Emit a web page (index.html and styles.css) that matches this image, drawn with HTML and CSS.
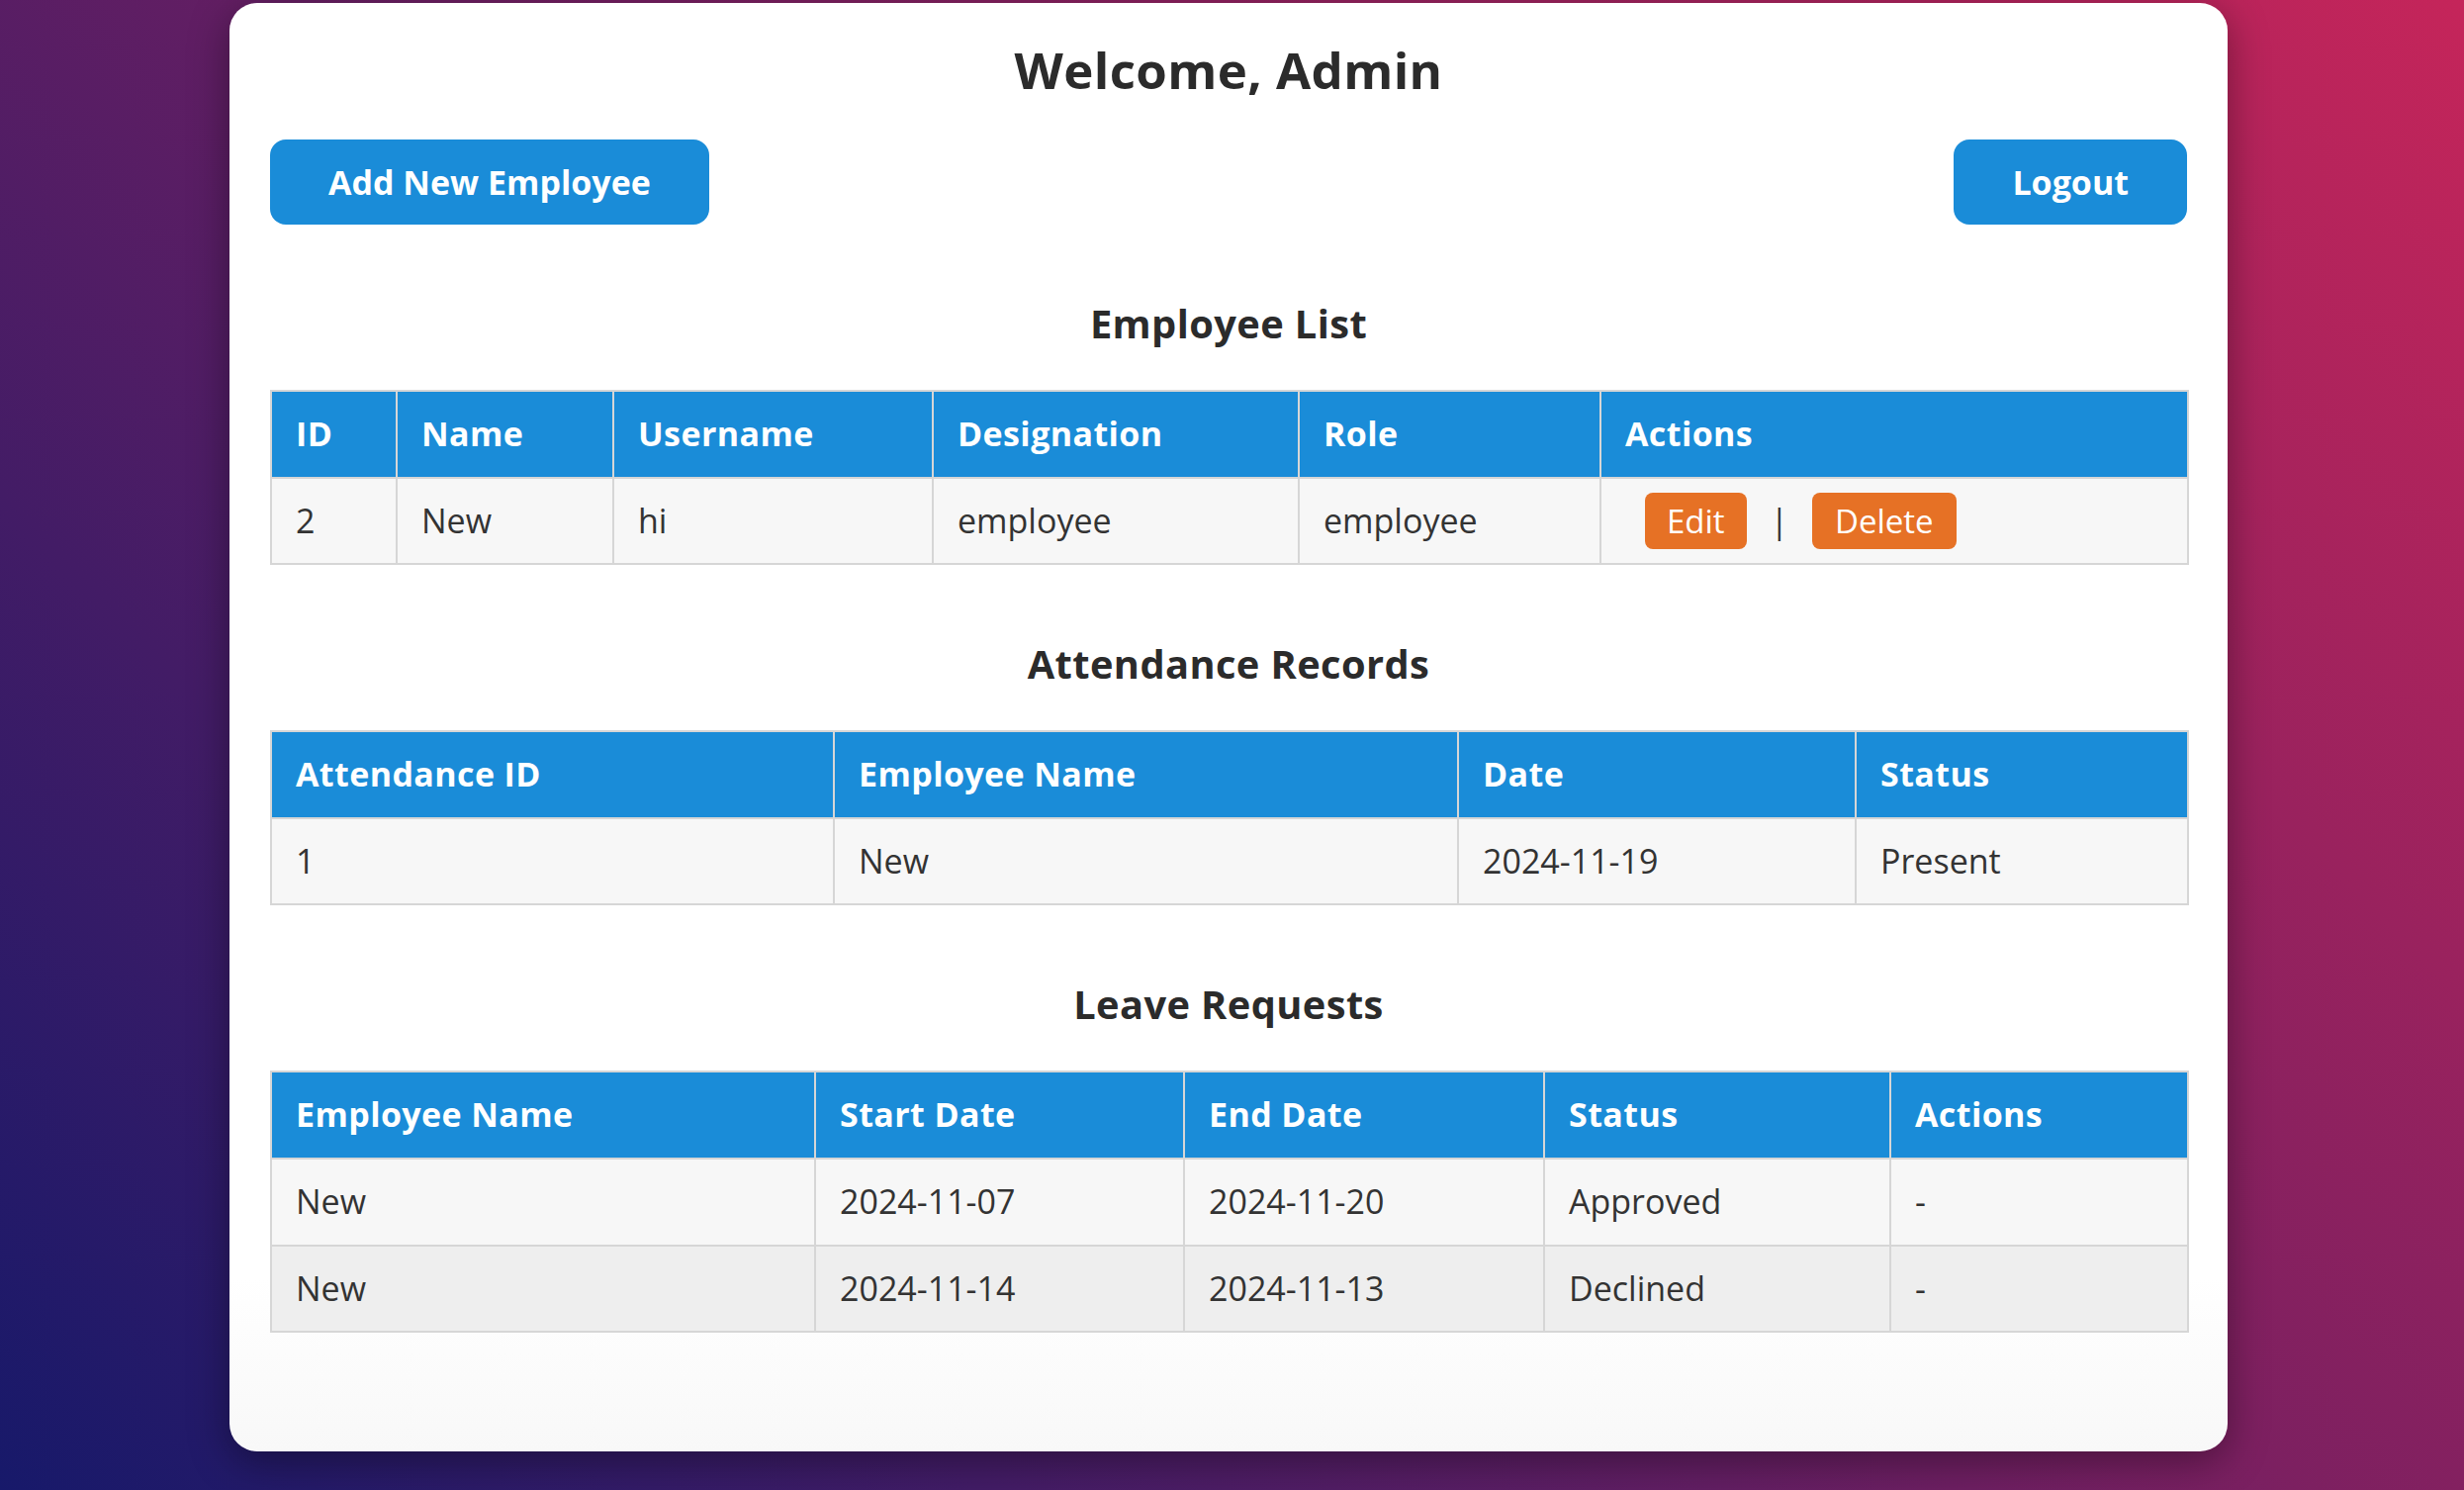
FILE: index.html
```html
<!DOCTYPE html>
<html lang="en">
<head>
<meta charset="utf-8">
<title>Admin Dashboard</title>
<link rel="stylesheet" href="styles.css">
</head>
<body>
<div class="card">
  <h2 class="title">Welcome, Admin</h2>
  <div class="toolbar">
    <a class="btn" href="#">Add New Employee</a>
    <a class="btn" href="#">Logout</a>
  </div>

  <h3 class="section-title">Employee List</h3>
  <table class="data">
    <colgroup>
      <col class="e-id"><col class="e-name"><col class="e-user"><col class="e-desig"><col class="e-role"><col class="e-act">
    </colgroup>
    <thead>
      <tr><th>ID</th><th>Name</th><th>Username</th><th>Designation</th><th>Role</th><th>Actions</th></tr>
    </thead>
    <tbody>
      <tr>
        <td>2</td><td>New</td><td>hi</td><td>employee</td><td>employee</td>
        <td><a class="act act-edit" href="#">Edit</a> | <a class="act act-delete" href="#">Delete</a></td>
      </tr>
    </tbody>
  </table>

  <h3 class="section-title">Attendance Records</h3>
  <table class="data">
    <colgroup>
      <col class="a-id"><col class="a-name"><col class="a-date"><col class="a-status">
    </colgroup>
    <thead>
      <tr><th>Attendance ID</th><th>Employee Name</th><th>Date</th><th>Status</th></tr>
    </thead>
    <tbody>
      <tr><td>1</td><td>New</td><td>2024-11-19</td><td>Present</td></tr>
    </tbody>
  </table>

  <h3 class="section-title">Leave Requests</h3>
  <table class="data">
    <colgroup>
      <col class="l-name"><col class="l-start"><col class="l-end"><col class="l-status"><col class="l-act">
    </colgroup>
    <thead>
      <tr><th>Employee Name</th><th>Start Date</th><th>End Date</th><th>Status</th><th>Actions</th></tr>
    </thead>
    <tbody>
      <tr><td>New</td><td>2024-11-07</td><td>2024-11-20</td><td>Approved</td><td>-</td></tr>
      <tr><td>New</td><td>2024-11-14</td><td>2024-11-13</td><td>Declined</td><td>-</td></tr>
    </tbody>
  </table>
</div>
</body>
</html>
```

FILE: styles.css
```css
html, body {
  margin: 0;
  padding: 0;
}

body {
  min-height: 1506px;
  background: linear-gradient(45deg, #17196a 0%, #c5255a 100%);
  font-family: "Open Sans", "Liberation Sans", sans-serif;
  font-size: 34px;
  color: #333333;
  overflow: hidden;
}

.card {
  box-sizing: border-box;
  width: 2020px;
  margin: 3px 0 0 232px;
  padding: 32px 41px 120px;
  background: linear-gradient(to bottom, #ffffff 88%, #f8f8f8 100%);
  border-radius: 28px;
  box-shadow: 0 10px 40px rgba(0, 0, 0, 0.38);
}

.title {
  margin: 0 0 36px;
  text-align: center;
  font-size: 51px;
  line-height: 70px;
  font-weight: 700;
  color: #2b2b2b;
  letter-spacing: 0.4px;
}

.toolbar {
  display: flex;
  justify-content: space-between;
  align-items: center;
}

.btn {
  display: inline-block;
  padding: 20px 59px;
  line-height: 46px;
  font-size: 34px;
  font-weight: 700;
  color: #ffffff;
  background: #1a8cd8;
  border-radius: 16px;
  text-decoration: none;
}

.section-title {
  margin: 73px 0 40px;
  text-align: center;
  font-size: 39.8px;
  line-height: 54px;
  font-weight: 700;
  color: #2b2b2b;
  letter-spacing: 0.4px;
}

.data {
  width: 100%;
  table-layout: fixed;
  border-collapse: collapse;
  border: 2px solid #d6d6d6;
}

.data th,
.data td {
  border: 2px solid #d6d6d6;
  padding: 20px 24px;
  line-height: 45.6px;
  text-align: left;
  font-size: 34px;
  white-space: nowrap;
}

.data th {
  background: #1a8cd8;
  color: #ffffff;
  font-weight: 700;
  letter-spacing: 0.4px;
}

.data td {
  color: #333333;
  background: #f7f7f7;
}

.data tbody tr:nth-child(even) td {
  background: #eeeeee;
}

.act {
  padding: 6px 22px;
  border-radius: 8px;
  background: #e67125;
  color: #ffffff;
  text-decoration: none;
  font-size: 33px;
}

.act-edit {
  margin: 0 15px 0 20px;
}

.act-delete {
  margin: 0 0 0 15px;
  padding: 6px 23px;
}

/* Employee list columns */
.e-id { width: 127px; }
.e-name { width: 219px; }
.e-user { width: 323px; }
.e-desig { width: 370px; }
.e-role { width: 305px; }
.e-act { width: 594px; }

/* Attendance columns */
.a-id { width: 569px; }
.a-name { width: 631px; }
.a-date { width: 402px; }
.a-status { width: 336px; }

/* Leave columns */
.l-name { width: 550px; }
.l-start { width: 373px; }
.l-end { width: 364px; }
.l-status { width: 350px; }
.l-act { width: 301px; }
```
